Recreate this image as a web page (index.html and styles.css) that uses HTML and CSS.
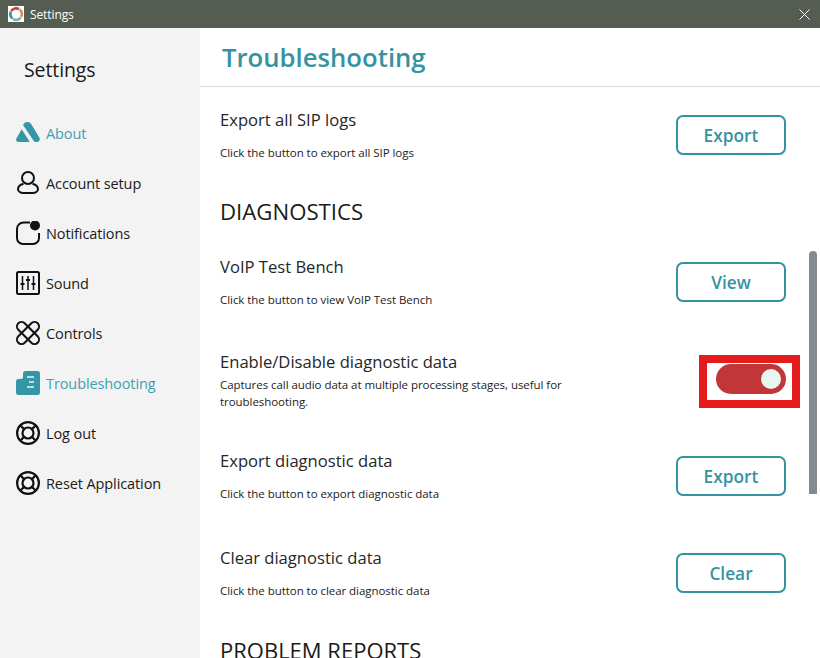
FILE: index.html
```html
<!DOCTYPE html>
<html lang="en">
<head>
<meta charset="utf-8">
<title>Settings</title>
<link rel="stylesheet" href="styles.css">
</head>
<body>
<div class="window">
  <header class="titlebar">
    <span class="app-icon">
      <svg viewBox="0 0 16 16" width="16" height="16" fill="none" stroke-width="2.6">
        <path d="M3.2 5.2A5.6 5.6 0 0 1 11 3.2" stroke="#b5473f"/>
        <path d="M11.600 3.600A5.600 5.600 0 0 1 13 11" stroke="#d98a4b"/>
        <path d="M12.600 11.600A5.600 5.600 0 0 1 5 12.900" stroke="#6fb5ae"/>
        <path d="M4.400 12.400A5.600 5.600 0 0 1 3 5.600" stroke="#3b8f9f"/>
      </svg>
    </span>
    <span class="titlebar-text">Settings</span>
    <svg class="close-icon" viewBox="0 0 11 11" width="11" height="11" fill="none" stroke="#fff" stroke-width="1"><path d="M.5.5l10 10M10.500.5l-10 10"/></svg>
  </header>
  <div class="body">
    <aside class="sidebar">
      <h2 class="sidebar-title">Settings</h2>
      <nav class="nav">
        <a class="nav-item active">
          <svg class="nav-icon" viewBox="0 0 24 24"><path fill="#3596a5" d="M7 4C8.500 1.500 10 1 11.500 1c1.500 0 3 .8 4 2.500l7.800 13c1.200 2 .2 4.500-2.800 4.500h-1c-.7 0-1.300-.3-1.700-1z"/><path fill="#3596a5" d="M5.700 8.300L13.800 21H2.500C.4 21-.5 19 .5 17.200z"/></svg>
          <span>About</span>
        </a>
        <a class="nav-item">
          <svg class="nav-icon" viewBox="0 0 24 24" fill="none" stroke="#111" stroke-width="2"><circle cx="12" cy="7" r="6"/><path d="M7.500 12.800C4 13.800 2 15.800 2 18c0 2.500 2.500 4 5.500 4h9c3 0 5.500-1.500 5.500-4 0-2.200-2-4.200-5.500-5.200"/></svg>
          <span>Account setup</span>
        </a>
        <a class="nav-item">
          <svg class="nav-icon" viewBox="0 0 24 24" fill="none" stroke="#111" stroke-width="2"><path d="M14 1.500H7.500A6.500 6.500 0 0 0 1 8v9a6 6 0 0 0 6 6h10a6 6 0 0 0 6-6v-5"/><circle cx="19" cy="4.500" r="5" fill="#111" stroke="none"/></svg>
          <span>Notifications</span>
        </a>
        <a class="nav-item">
          <svg class="nav-icon" viewBox="0 0 24 24" fill="none" stroke="#111" stroke-width="2"><rect x="1" y="1" width="22" height="22" rx="1.500"/><path d="M6.500 5v14M12 5v14M17.500 5v14" stroke-width="1.500"/><path d="M4.500 13h4M10 9h4M15.500 13h4" stroke-width="2.200"/></svg>
          <span>Sound</span>
        </a>
        <a class="nav-item">
          <svg class="nav-icon" viewBox="0 0 24 24" fill="none" stroke="#111" stroke-width="2"><rect x="-1.700" y="7.500" width="27.400" height="9" rx="4.500" transform="rotate(45 12 12)"/><rect x="-1.700" y="7.500" width="27.400" height="9" rx="4.500" transform="rotate(-45 12 12)"/></svg>
          <span>Controls</span>
        </a>
        <a class="nav-item active">
          <svg class="nav-icon" viewBox="0 0 24 24"><path fill="#3596a5" d="M7 2.500C7 1 8 0 9.500 0h12C23 0 24 1 24 2.500v19c0 1.500-1 2.500-2.500 2.500h-19C1 24 0 23 0 21.500V10.500C0 9 1 8 2.500 8H5c1.300 0 2-.8 2-2z"/><path stroke="#f3f3f3" stroke-width="1.600" d="M11 6h7M13 11h5M11 16h7"/></svg>
          <span>Troubleshooting</span>
        </a>
        <a class="nav-item">
          <svg class="nav-icon" viewBox="0 0 24 24" fill="none" stroke="#111" stroke-width="2.200"><circle cx="12" cy="12" r="10.900"/><circle cx="12" cy="12" r="5.500"/><path d="M4.200 4.200l4 4M19.800 4.200l-4 4M4.200 19.800l4-4M19.800 19.800l-4-4"/></svg>
          <span>Log out</span>
        </a>
        <a class="nav-item">
          <svg class="nav-icon" viewBox="0 0 24 24" fill="none" stroke="#111" stroke-width="2.200"><circle cx="12" cy="12" r="10.900"/><circle cx="12" cy="12" r="5.500"/><path d="M4.200 4.200l4 4M19.800 4.200l-4 4M4.200 19.800l4-4M19.800 19.800l-4-4"/></svg>
          <span>Reset Application</span>
        </a>
      </nav>
    </aside>
    <main class="main">
      <h1 class="page-title">Troubleshooting</h1>
      <div class="content">
        <section class="row row-first">
          <div class="row-text">
            <h3 class="row-title">Export all SIP logs</h3>
            <p class="row-desc">Click the button to export all SIP logs</p>
          </div>
          <button class="btn">Export</button>
        </section>
        <h2 class="section-heading">DIAGNOSTICS</h2>
        <section class="row">
          <div class="row-text">
            <h3 class="row-title">VoIP Test Bench</h3>
            <p class="row-desc">Click the button to view VoIP Test Bench</p>
          </div>
          <button class="btn">View</button>
        </section>
        <section class="row row-toggle">
          <div class="row-text">
            <h3 class="row-title">Enable/Disable diagnostic data</h3>
            <p class="row-desc row-desc-tight">Captures call audio data at multiple processing stages, useful for troubleshooting.</p>
          </div>
          <div class="highlight"><span class="toggle"><span class="knob"></span></span></div>
        </section>
        <section class="row row-export">
          <div class="row-text">
            <h3 class="row-title">Export diagnostic data</h3>
            <p class="row-desc">Click the button to export diagnostic data</p>
          </div>
          <button class="btn">Export</button>
        </section>
        <section class="row row-last">
          <div class="row-text">
            <h3 class="row-title">Clear diagnostic data</h3>
            <p class="row-desc">Click the button to clear diagnostic data</p>
          </div>
          <button class="btn">Clear</button>
        </section>
        <h2 class="section-heading heading-last">PROBLEM REPORTS</h2>
      </div>
      <div class="scrollbar"></div>
    </main>
  </div>
</div>
</body>
</html>
```

FILE: styles.css
```css
* { box-sizing: border-box; margin: 0; padding: 0; }
html, body { width: 820px; height: 658px; overflow: hidden; }
body { font-family: "Open Sans", "Noto Sans", sans-serif; color: #111; background: #fff; }
.window { width: 820px; height: 658px; display: flex; flex-direction: column; }
.titlebar { height: 28px; flex: none; background: #555d53; display: flex; align-items: center; padding-left: 8px; padding-right: 10px; color: #fff; }
.app-icon { width: 16px; height: 16px; background: #fff; display: block; }
.app-icon svg { display: block; }
.titlebar-text { font-size: 12px; margin-left: 6px; flex: 1; letter-spacing: -0.1px; }
.close-icon { display: block; }
.body { flex: 1; display: flex; min-height: 0; }
.sidebar { width: 200px; flex: none; background: #f3f3f3; border-right: 1px solid #f0f0f0; padding-left: 16px; }
.sidebar-title { font-size: 19.5px; font-weight: 400; line-height: 26px; margin-top: 29px; margin-left: 8px; letter-spacing: -0.1px; color: #1a1a1a; }
.nav { margin-top: 38px; display: flex; flex-direction: column; gap: 26px; }
.nav-item { display: flex; align-items: center; gap: 6px; height: 24px; font-size: 14.5px; letter-spacing: -0.1px; color: #1a1a1a; }
.nav-item.active { color: #3d9fb2; }
.nav-icon { width: 24px; height: 24px; flex: none; display: block; }
.main { flex: 1; min-width: 0; position: relative; overflow: hidden; }
.page-title { height: 59px; border-bottom: 1px solid #d9d9d9; padding-left: 22px; font-size: 25.7px; font-weight: 600; line-height: 60px; color: #35939f; }
.content { padding: 29px 34px 0 20px; }
.row { display: flex; justify-content: space-between; align-items: flex-start; height: 57px; margin-bottom: 38px; }
.row-first { margin-bottom: 0; }
.row-title { font-size: 16.6px; font-weight: 400; line-height: 24px; color: #262626; margin-top: -8px; }
.row-desc { font-size: 11.5px; line-height: 17px; margin-top: 12px; letter-spacing: -0.05px; color: #222; width: 360px; }
.row-desc-tight { margin-top: 2px; }
.btn { width: 110px; height: 40px; margin-top: -1px; flex: none; border: 2px solid #35939f; border-radius: 7px; background: #fff; color: #35939f; font-family: inherit; font-size: 17.3px; font-weight: 600; }
.section-heading { font-size: 22.2px; font-weight: 400; line-height: 28px; color: #1a1a1a; margin-top: 25px; margin-bottom: 37px; }
.heading-last { margin-top: 0; font-size: 22px; }
.row-toggle { margin-bottom: 42px; }
.row-export { margin-bottom: 40px; }
.row-last { margin-bottom: 25px; }
.highlight { width: 101px; height: 53px; flex: none; border: 8px solid #e41c1c; margin-top: -3px; margin-right: -14px; padding: 1px 0 0 9px; background: #fff; }
.toggle { width: 70px; height: 30px; border-radius: 15px; background: #c23538; display: flex; align-items: center; justify-content: flex-end; padding-right: 5px; }
.knob { width: 20px; height: 20px; border-radius: 50%; background: #e8f5f0; display: block; }
.scrollbar { position: absolute; left: 609px; top: 223px; width: 8px; height: 243px; border-radius: 4px 4px 0 0; background: #858a92; }
```
